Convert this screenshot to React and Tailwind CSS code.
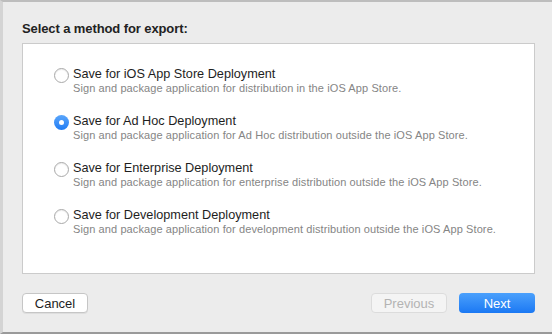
import React from 'react';

const options = [
  { title: 'Save for iOS App Store Deployment', desc: 'Sign and package application for distribution in the iOS App Store.' },
  { title: 'Save for Ad Hoc Deployment', desc: 'Sign and package application for Ad Hoc distribution outside the iOS App Store.', checked: true },
  { title: 'Save for Enterprise Deployment', desc: 'Sign and package application for enterprise distribution outside the iOS App Store.' },
  { title: 'Save for Development Deployment', desc: 'Sign and package application for development distribution outside the iOS App Store.' },
];

const Radio = ({ checked }) =>
  checked ? (
    <span className="block w-[15px] h-[15px] rounded-full bg-gradient-to-b from-[#5aa6fb] to-[#1f7cf4] flex items-center justify-center shrink-0">
      <span className="block w-[5px] h-[5px] rounded-full bg-white" />
    </span>
  ) : (
    <span className="block w-[15px] h-[15px] rounded-full bg-white border border-[#a9a9a9] shadow-[inset_0_1px_1px_rgba(0,0,0,0.08)] shrink-0" />
  );

const App = () => {
  return (
    <div className="w-[552px] h-[334px] bg-[#ececec] font-['Liberation_Sans',Arial,sans-serif] text-[#222] flex flex-col border-l-[3px] border-l-[#d4d4d4] border-t-2 border-t-[#bdbdbd] border-b-2 border-b-[#9a9a9a] overflow-hidden">
      <div className="pl-[19px] pr-[17px] pt-[19px] flex flex-col flex-1">
        <h1 className="text-[13px] font-bold leading-[16px] tracking-[-0.1px]">Select a method for export:</h1>

        <div className="mt-[6px] h-[231px] bg-white border border-[#cbcbcb] pl-[31px] pt-[23px] flex flex-col gap-[19px]">
          {options.map((o) => (
            <div key={o.title} className="flex items-start gap-[4px]">
              <div className="pt-[1px]"><Radio checked={o.checked} /></div>
              <div className="flex flex-col">
                <span className="text-[12.7px] leading-[15px] text-[#1e1e1e]">{o.title}</span>
                <span className="text-[11px] tracking-[0.1px] leading-[13px] text-[#858585]">{o.desc}</span>
              </div>
            </div>
          ))}
        </div>

        <div className="mt-[19px] flex items-center">
          <button className="w-[66px] h-[20px] bg-white border border-[#c6c6c6] rounded-[4px] shadow-[0_1px_0_rgba(0,0,0,0.06)] text-[13px] leading-none text-[#1e1e1e]">
            Cancel
          </button>
          <div className="flex-1" />
          <button className="w-[76px] h-[20px] bg-[#f4f4f4] border border-[#dcdcdc] rounded-[4px] text-[13px] leading-none text-[#b3b3b3]">
            Previous
          </button>
          <button className="ml-[12px] w-[76px] h-[20px] rounded-[4px] bg-gradient-to-b from-[#4aa0fc] to-[#1a78f3] text-[13px] leading-none text-white">
            Next
          </button>
        </div>
      </div>
    </div>
  );
};

export default App;
